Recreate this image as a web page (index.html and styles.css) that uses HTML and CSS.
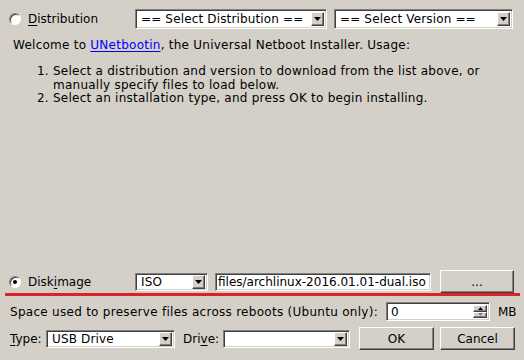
FILE: index.html
```html
<!DOCTYPE html>
<html>
<head>
<meta charset="utf-8">
<link rel="stylesheet" href="styles.css">
</head>
<body>
<div class="window">
  <div class="row-top">
    <label class="radio-label"><span class="radio"></span><span><u>D</u>istribution</span></label>
    <div class="combo sunken"><span class="combo-text">== Select Distribution ==</span><span class="arrow raised"><svg width="7" height="4" viewBox="0 0 7 4"><path d="M0 0h7L3.5 4z"/></svg></span></div>
    <div class="combo sunken"><span class="combo-text">== Select Version ==</span><span class="arrow raised"><svg width="7" height="4" viewBox="0 0 7 4"><path d="M0 0h7L3.5 4z"/></svg></span></div>
  </div>

  <div class="welcome">
    <p class="intro">Welcome to <a class="link" href="#">UNetbootin</a>, the Universal Netboot Installer. Usage:</p>
    <ol class="steps">
      <li>Select a distribution and version to download from the list above, or manually specify files to load below.</li>
      <li>Select an installation type, and press OK to begin installing.</li>
    </ol>
  </div>

  <div class="bottom">
    <div class="row-disk">
      <label class="radio-label"><span class="radio checked"></span><span>Disk<u>i</u>mage</span></label>
      <div class="combo sunken small"><span class="combo-text">ISO</span><span class="arrow raised"><svg width="7" height="4" viewBox="0 0 7 4"><path d="M0 0h7L3.5 4z"/></svg></span></div>
      <div class="field sunken">files/archlinux-2016.01.01-dual.iso</div>
      <div class="button raised browse">...</div>
    </div>
    <div class="redline"></div>
    <div class="row-space">
      <span class="space-label">Space used to preserve files across reboots (Ubuntu only):</span>
      <div class="spin sunken"><span class="spin-text">0</span><span class="spin-buttons"><span class="spin-btn raised"><svg width="5" height="3" viewBox="0 0 5 3"><path d="M2.5 0L5 3H0z"/></svg></span><span class="spin-btn raised disabled"><svg width="5" height="3" viewBox="0 0 5 3"><path d="M0 0h5L2.5 3z"/></svg></span></span></div>
      <span class="unit">MB</span>
    </div>
    <div class="row-type">
      <span class="type-label"><u>T</u>ype:</span>
      <div class="combo sunken small type-combo"><span class="combo-text">USB Drive</span><span class="arrow raised"><svg width="7" height="4" viewBox="0 0 7 4"><path d="M0 0h7L3.5 4z"/></svg></span></div>
      <span class="drive-label">Dri<u>v</u>e:</span>
      <div class="combo sunken small drive-combo"><span class="combo-text"></span><span class="arrow raised"><svg width="7" height="4" viewBox="0 0 7 4"><path d="M0 0h7L3.5 4z"/></svg></span></div>
      <div class="button raised ok">OK</div>
      <div class="button raised cancel">Cancel</div>
    </div>
  </div>
</div>
</body>
</html>
```

FILE: styles.css
```css
* { box-sizing: border-box; }
html, body { margin: 0; padding: 0; }
body {
  width: 524px;
  height: 360px;
  overflow: hidden;
  background: #d4d0c8;
  font-family: "DejaVu Sans", "Liberation Sans", sans-serif;
  font-size: 12px;
  color: #000;
}
u { text-decoration: underline; text-underline-offset: 2px; }

.window {
  height: 360px;
  display: flex;
  flex-direction: column;
}

.sunken {
  background: #fff;
  border: 1px solid;
  border-color: #808080 #fff #fff #808080;
  box-shadow: inset 1px 1px 0 #404040, inset -1px -1px 0 #d4d0c8;
}
.raised {
  background: #d4d0c8;
  border: 1px solid;
  border-color: #fff #404040 #404040 #fff;
  box-shadow: inset -1px -1px 0 #808080;
}

.radio-label {
  display: flex;
  align-items: center;
  gap: 7px;
  padding-left: 9px;
}
.radio {
  width: 12px;
  height: 12px;
  flex: none;
  border-radius: 50%;
  border: 1px solid;
  border-color: #808080 #fff #fff #808080;
  background: #fff;
  box-shadow: inset 1px 1px 0 #404040;
  display: flex;
  align-items: center;
  justify-content: center;
}
.radio.checked::after {
  content: "";
  width: 4px;
  height: 4px;
  border-radius: 50%;
  background: #000;
}

.row-top {
  display: grid;
  grid-template-columns: 128px 192px 179px;
  column-gap: 7px;
  height: 19px;
  margin-top: 9px;
  align-items: stretch;
}

.combo {
  display: flex;
  align-items: stretch;
  padding: 2px 2px 2px 5px;
  letter-spacing: 0.15px;
}
.combo-text {
  flex: 1;
  display: flex;
  align-items: center;
  white-space: nowrap;
  overflow: hidden;
}
.arrow {
  width: 13px;
  flex: none;
  display: flex;
  align-items: center;
  justify-content: center;
}
.arrow svg { display: block; }

.welcome {
  padding-left: 13px;
  margin-top: 10px;
  letter-spacing: 0.25px;
}
.intro {
  margin: 0;
  line-height: 14px;
}
.link { color: #0000ff; text-decoration: underline; text-underline-offset: 2px; }
.steps {
  margin: 13px 0 0 0;
  padding-left: 40px;
  line-height: 13.5px;
}

.bottom {
  margin-top: auto;
  margin-bottom: 10px;
}

.row-disk {
  display: grid;
  grid-template-columns: 128px 73px 216px 74px;
  column-gap: 7px;
  height: 23px;
  align-items: center;
}
.row-disk .small { height: 18px; }
.browse { height: 23px; margin-left: 2px; width: 74px; }
.field {
  height: 18px;
  display: flex;
  align-items: center;
  padding-left: 2px;
  white-space: nowrap;
  overflow: hidden;
}
.small { padding-top: 1px; padding-bottom: 1px; }

.button {
  display: flex;
  align-items: center;
  justify-content: center;
}

.redline {
  height: 3px;
  margin: 0 4px 0 5px;
  background: #d8232a;
}

.row-space {
  display: flex;
  align-items: center;
  height: 19px;
  margin-top: 6px;
  padding-left: 10px;
}
.space-label { width: 376px; flex: none; white-space: nowrap; letter-spacing: 0.28px; }
.spin {
  width: 104px;
  height: 19px;
  flex: none;
  display: flex;
  align-items: stretch;
  padding: 2px 2px 2px 4px;
}
.spin-text { flex: 1; display: flex; align-items: center; }
.spin-buttons {
  width: 14px;
  display: flex;
  flex-direction: column;
}
.spin-btn {
  flex: 1;
  display: flex;
  align-items: center;
  justify-content: center;
}
.spin-btn svg { display: block; }
.spin-btn.disabled svg { fill: #808080; }
.unit { margin-left: 8px; }

.row-type {
  display: flex;
  align-items: center;
  height: 23px;
  margin-top: 6px;
  padding-left: 10px;
}
.type-label { width: 36px; flex: none; }
.type-combo { width: 129px; height: 18px; flex: none; }
.drive-label { width: 40px; margin-left: 8px; flex: none; }
.drive-combo { width: 127px; height: 18px; flex: none; }
.ok { width: 75px; height: 23px; margin-left: 9px; }
.cancel { width: 75px; height: 23px; margin-left: 6px; }
```
